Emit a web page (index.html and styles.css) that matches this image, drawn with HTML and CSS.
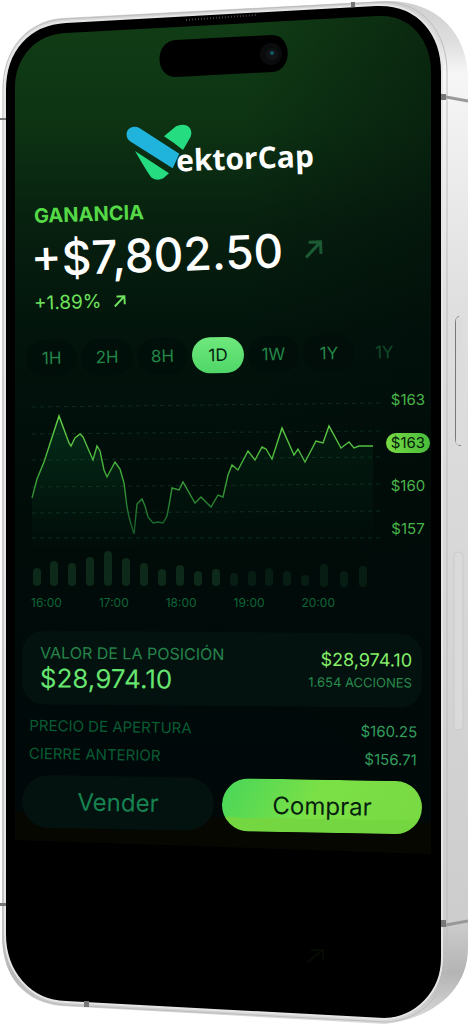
FILE: index.html
```
<!DOCTYPE html>
<html lang="es">
<head>
  <meta charset="UTF-8">
  <meta name="viewport" content="width=device-width, initial-scale=1">
  <title>VektorCap</title>
  <link rel="stylesheet" href="styles.css">
</head>
<body>

  <main class="phone">

    <!-- Carcasa del teléfono -->
    <svg class="phone-frame" viewBox="0 0 468 1024" preserveAspectRatio="none" aria-hidden="true">
      <defs>
        <linearGradient id="side" x1="0" y1="0" x2="0" y2="1">
          <stop offset="0" stop-color="#cfcfcf"/>
          <stop offset=".04" stop-color="#dedede"/>
          <stop offset=".07" stop-color="#f6f6f6"/>
          <stop offset=".3" stop-color="#dfdfdf"/>
          <stop offset=".9" stop-color="#cdcdcd"/>
          <stop offset=".95" stop-color="#b4b4b4"/>
          <stop offset="1" stop-color="#dcdcdc"/>
        </linearGradient>
        <linearGradient id="glass" x1="0" y1="0" x2="0" y2="1">
          <stop offset="0" stop-color="#113d15"/>
          <stop offset=".13" stop-color="#0d3313"/>
          <stop offset=".25" stop-color="#07200f"/>
          <stop offset=".38" stop-color="#02140c"/>
          <stop offset=".55" stop-color="#010d09"/>
          <stop offset="1" stop-color="#000709"/>
        </linearGradient>
        <linearGradient id="shade" x1="0" y1="0" x2="1" y2="0">
          <stop offset=".55" stop-color="#000a08" stop-opacity="0"/>
          <stop offset="1" stop-color="#000a08" stop-opacity=".4"/>
        </linearGradient>
      </defs>
      <path fill="url(#side)" d="M2 90C2 50 26 21 62 18L385 1C436 0 468 32 468 80V948C468 992 430 1019 385 1024L62 1006C26 1003 2 978 2 936Z"/>
      <path fill="none" stroke="#bdbdbd" d="M3 90C3 50 27 21 64 19L380 2C424 0 447 34 447 72V955C447 996 420 1021 385 1022L64 1005C27 1002 3 976 3 936Z"/>
      <path fill="#000" stroke="#e6e6e6" stroke-width="2" d="M5 90C5 50 29 24 66 22L376 5C420 3 442 36 442 72V958C442 992 416 1018 384 1019L66 1002C30 1001 5 972 5 934Z"/>
      <path fill="#777" d="M0 118h6v2H0zM0 903h6v3H0zM441 94h5v6h-5zM441 920h5v7h-5zM84 1001h5v6h-5zM351 2h4v5h-4z"/>
      <path fill="none" stroke="#999" stroke-width="3" d="M446 97L468 101M446 925L468 921"/>
      <path fill="url(#glass)" d="M15 88C15 58 35 34 66 33L378 16C410 14 431 40 431 72V854L15 840Z"/>
      <path fill="url(#shade)" d="M15 88C15 58 35 34 66 33L378 16C410 14 431 40 431 72V854L15 840Z"/>
      <path fill="#060700" d="M15 811L431 823V854L15 840Z"/>
      <path fill="none" stroke="#444" stroke-width="2" stroke-dasharray="1 2" d="M186 20L256 15"/>
      <path d="M176 40L272 35C293 35 293 71 272 72L176 77C154 77 154 41 176 40Z"/>
      <circle cx="271" cy="54" r="11" fill="#090b0c"/>
      <circle cx="272" cy="54" r="6" fill="#101417"/>
      <circle cx="272" cy="53" r="2" fill="#165668"/>
      <path fill="none" stroke="#777" stroke-width="2" d="M459 317Q456 318 456 323V438Q456 445 461 445"/>
      <rect x="456" y="317" width="7" height="128" rx="3" fill="#dcdcdc"/>
      <rect x="454" y="552" width="9" height="178" rx="4" fill="#dadada" stroke="#cacaca"/>
      <path fill="none" stroke="#060b04" stroke-width="2" d="M307 963L322 950M311 950H323V960"/>
    </svg>

    <header class="logo">
      <svg class="logo-mark" viewBox="50 42 198 171" aria-hidden="true">
        <path fill="#20b4dc" d="M89 53L210 131L190 175L62 94C43 79 52 49 76 50Q83 50 89 53Z"/>
        <path fill="#25dc80" d="M164 79L200 49Q216 40 234 47Q251 60 244 80L221 120Q195 99 164 79Z"/>
        <path fill="#25dc80" d="M77 123L179 190L162 205Q143 214 127 203Q121 199 77 123Z"/>
      </svg>
      <h1>ektorCap</h1>
    </header>

    <section class="gain">
      <h2>GANANCIA</h2>
      <p class="amount">+$7,802.50
        <svg class="arrow-big" viewBox="0 0 18 18" aria-hidden="true"><path d="M1 17L16 2M4 2H16V14"/></svg>
      </p>
      <p class="percent">+1.89%
        <svg class="arrow" viewBox="0 0 18 18" aria-hidden="true"><path d="M1 17L16 2M4 2H16V14"/></svg>
      </p>
    </section>

    <nav class="ranges">
      <button>1H</button>
      <button>2H</button>
      <button>8H</button>
      <button class="active">1D</button>
      <button>1W</button>
      <button>1Y</button>
      <button class="faded">1Y</button>
    </nav>

    <section class="chart">
      <svg class="plot" viewBox="0 0 350 190" preserveAspectRatio="none" role="img" aria-label="Precio de 16:00 a 20:00">
        <defs>
          <linearGradient id="line" gradientUnits="userSpaceOnUse" x1="0" y1="20" x2="0" y2="135">
            <stop offset="0" stop-color="#63cf45"/>
            <stop offset=".45" stop-color="#43ad3b"/>
            <stop offset="1" stop-color="#0f5627"/>
          </linearGradient>
          <linearGradient id="area" x1="0" y1="0" x2="0" y2="1">
            <stop offset="0" stop-color="#06502a" stop-opacity=".45"/>
            <stop offset="1" stop-color="#06502a" stop-opacity="0"/>
          </linearGradient>
          <linearGradient id="area-right" x1="0" y1="0" x2="0" y2="1">
            <stop offset="0" stop-color="#06502a" stop-opacity=".2"/>
            <stop offset="1" stop-color="#06502a" stop-opacity="0"/>
          </linearGradient>
        </defs>
        <path class="guides" d="M1 7L349 3M1 34L349 31M1 60L349 57M1 87L349 84M1 113L349 111M1 138H349"/>
        <path fill="url(#area)" d="M1 98L6 79L13 62L28 16L40 46L49 34L62 60L66 46L76 77L84 62L89 69L93 83L96 107L103 134V150H1Z"/>
        <path fill="url(#area-right)" d="M103 134L106 104L111 99L122 123H132L141 88L148 90L152 82L164 103L170 97L180 107L192 97L201 65L207 70L217 51L224 60L231 47L241 59L251 28L263 55L267 49L274 62L285 41L292 43L298 26L310 48L342 46V150H103Z"/>
        <path class="price" stroke="url(#line)" d="M1 98L6 79L13 62L28 16L38 43L40 46L44 38L49 34L52 37L62 60L66 46L69 51L73 70L76 77L84 62L89 69L93 83L96 107L98 117L103 134L106 104L111 99L114 106L117 117L122 123L127 122L132 123L136 116L139 100L141 88L148 90L152 82L164 103L170 97L180 107L187 95L192 97L197 75L201 65L207 70L217 51L224 60L231 47L235 49L241 59L251 28L263 55L267 49L274 62L285 41L292 43L298 26L310 48L318 42L323 48L328 46H342"/>
        <g class="volume">
          <rect x="2" y="168" width="8" height="18" rx="4"/>
          <rect x="19" y="161" width="8" height="25" rx="4"/>
          <rect x="37" y="163" width="8" height="23" rx="4"/>
          <rect x="55" y="157" width="8" height="29" rx="4"/>
          <rect x="73" y="151" width="8" height="35" rx="4"/>
          <rect x="91" y="158" width="8" height="28" rx="4"/>
          <rect x="109" y="163" width="8" height="23" rx="4"/>
          <rect x="127" y="169" width="8" height="17" rx="4"/>
          <rect x="145" y="165" width="8" height="21" rx="4"/>
          <rect x="163" y="171" width="8" height="15" rx="4"/>
          <rect x="181" y="169" width="8" height="17" rx="4"/>
        </g>
        <g class="volume volume-dim">
          <rect x="199" y="173" width="8" height="13" rx="4"/>
          <rect x="217" y="171" width="8" height="15" rx="4"/>
          <rect x="234" y="168" width="8" height="18" rx="4"/>
          <rect x="252" y="171" width="8" height="15" rx="4"/>
          <rect x="270" y="175" width="8" height="11" rx="4"/>
          <rect x="289" y="164" width="8" height="23" rx="4"/>
          <rect x="309" y="171" width="8" height="16" rx="4"/>
          <rect x="328" y="166" width="8" height="21" rx="4"/>
        </g>
      </svg>
      <div class="prices">
        <span>$163</span>
        <span class="current">$163</span>
        <span>$160</span>
        <span>$157</span>
      </div>
      <div class="hours">
        <span>16:00</span>
        <span>17:00</span>
        <span>18:00</span>
        <span>19:00</span>
        <span>20:00</span>
      </div>
    </section>

    <section class="position">
      <div>
        <h3>VALOR DE LA POSICIÓN</h3>
        <p class="value">$28,974.10</p>
      </div>
      <div class="shares">
        <p class="total">$28,974.10</p>
        <p class="count">1.654 ACCIONES</p>
      </div>
    </section>

    <dl class="details">
      <div>
        <dt>PRECIO DE APERTURA</dt>
        <dd>$160.25</dd>
      </div>
      <div>
        <dt>CIERRE ANTERIOR</dt>
        <dd>$156.71</dd>
      </div>
    </dl>

    <div class="actions">
      <button class="sell">Vender</button>
      <button class="buy">Comprar</button>
    </div>

  </main>

</body>
</html>
```

FILE: styles.css
```
* {
  box-sizing: border-box;
}

body {
  margin: 0;
  background-color: #ffffff;
  font-family: Inter, "Liberation Sans", sans-serif;
}

h1, h2, h3, p, dl, dd {
  margin: 0;
  font-weight: 400;
}

button {
  border: none;
  font-family: inherit;
  cursor: pointer;
}

.phone {
  position: relative;
  min-height: 100vh;
  padding: 124px 46px 180px 22px;
  overflow: hidden;
}

/* la carcasa queda detrás del contenido */
.phone-frame {
  position: absolute;
  top: 0;
  left: 0;
  z-index: -1;
  width: 100%;
  height: 100%;
}

.logo {
  display: flex;
  justify-content: center;
  align-items: flex-start;
  padding-right: 4px;
}

.logo-mark {
  width: 66px;
  height: 57px;
}

.logo h1 {
  margin-top: 14px;
  margin-left: -16px;
  font-family: "Open Sans", "Noto Sans", sans-serif;
  font-size: 30px;
  font-weight: 700;
  line-height: 40px;
  color: #ffffff;
  transform: rotate(-2deg);
}

.gain {
  padding-left: 12px;
  margin-top: 24px;
}

.gain h2, .amount, .percent {
  transform: rotate(-2deg);
  transform-origin: left center;
}

.gain h2 {
  font-size: 20px;
  font-weight: 700;
  line-height: 22px;
  color: #55d947;
}

.amount {
  display: flex;
  align-items: center;
  gap: 22px;
  margin-left: -3px;
  font-size: 46px;
  font-weight: 500;
  line-height: 64px;
  color: #ffffff;
}

.percent {
  display: flex;
  align-items: center;
  gap: 12px;
  font-size: 19px;
  line-height: 26px;
  color: #6fe35c;
}

.arrow, .arrow-big {
  fill: none;
  stroke: currentColor;
  stroke-width: 3;
}

.arrow {
  width: 12px;
  height: 12px;
}

.arrow-big {
  width: 18px;
  height: 18px;
  color: #1c5a34;
}

.ranges {
  display: grid;
  grid-template-columns: repeat(7, 1fr);
  gap: 4px;
  padding: 0 12px 0 4px;
  margin-top: 20px;
  transform: rotate(-1deg);
}

.ranges button {
  height: 36px;
  padding: 0;
  border-radius: 18px;
  background-color: rgba(0, 10, 8, 0.4);
  font-size: 17px;
  color: #238548;
}

.ranges .active {
  background: linear-gradient(#6fe87c, #50d668);
  color: #03200f;
}

.ranges .faded {
  background: none;
  color: #0e4a2a;
}

.chart {
  display: grid;
  grid-template-columns: 1fr 46px;
  column-gap: 4px;
  padding-left: 9px;
  margin-top: 27px;
  margin-right: -9px;
}

.plot {
  width: 100%;
  height: 190px;
}

.guides {
  fill: none;
  stroke: #0d2c1c;
  stroke-dasharray: 4 4;
}

.price {
  fill: none;
  stroke-width: 1.4;
}

.volume {
  fill: #0c2919;
}

.volume-dim {
  fill: #071d14;
}

.prices {
  display: flex;
  flex-direction: column;
  align-items: center;
  gap: 23px;
  margin-top: -10px;
  font-size: 15px;
  line-height: 20px;
  color: #49b34a;
}

.prices .current {
  padding: 0 5px;
  border-radius: 10px;
  background: linear-gradient(90deg, #78d944, #48bd3b);
  color: #06200a;
}

.hours {
  display: flex;
  justify-content: space-between;
  padding: 4px 46px 0 0;
  font-size: 12px;
  line-height: 18px;
  color: #0d6638;
}

.position {
  display: flex;
  justify-content: space-between;
  align-items: center;
  height: 74px;
  padding: 0 10px 0 18px;
  margin-top: 20px;
  border-radius: 22px;
  background-color: #03120f;
  transform: rotate(0.5deg);
}

.position h3 {
  font-size: 16px;
  line-height: 22px;
  color: #25844a;
}

.value {
  font-size: 26px;
  line-height: 30px;
  color: #67e570;
}

.shares {
  text-align: right;
}

.total {
  font-size: 18px;
  line-height: 24px;
  color: #86ee68;
}

.count {
  font-size: 13px;
  line-height: 20px;
  color: #288a4d;
}

.details {
  padding: 0 5px 0 7px;
  margin-top: 9px;
  transform: rotate(1deg);
}

.details div {
  display: flex;
  justify-content: space-between;
  font-size: 15px;
  line-height: 28px;
}

.details dt {
  color: #085c34;
}

.details dd {
  color: #329c5d;
}

.actions {
  display: grid;
  grid-template-columns: 192fr 200fr;
  gap: 8px;
  margin-top: 7px;
  transform: rotate(1deg);
}

.actions button {
  height: 53px;
  border-radius: 27px;
  font-size: 24px;
}

.sell {
  background-color: #03110f;
  color: #168350;
}

.buy {
  background: linear-gradient(transparent 74%, #74d742 74%), linear-gradient(120deg, #47d65a, #7be046 45%, #79d943);
  color: #05200e;
}
```
